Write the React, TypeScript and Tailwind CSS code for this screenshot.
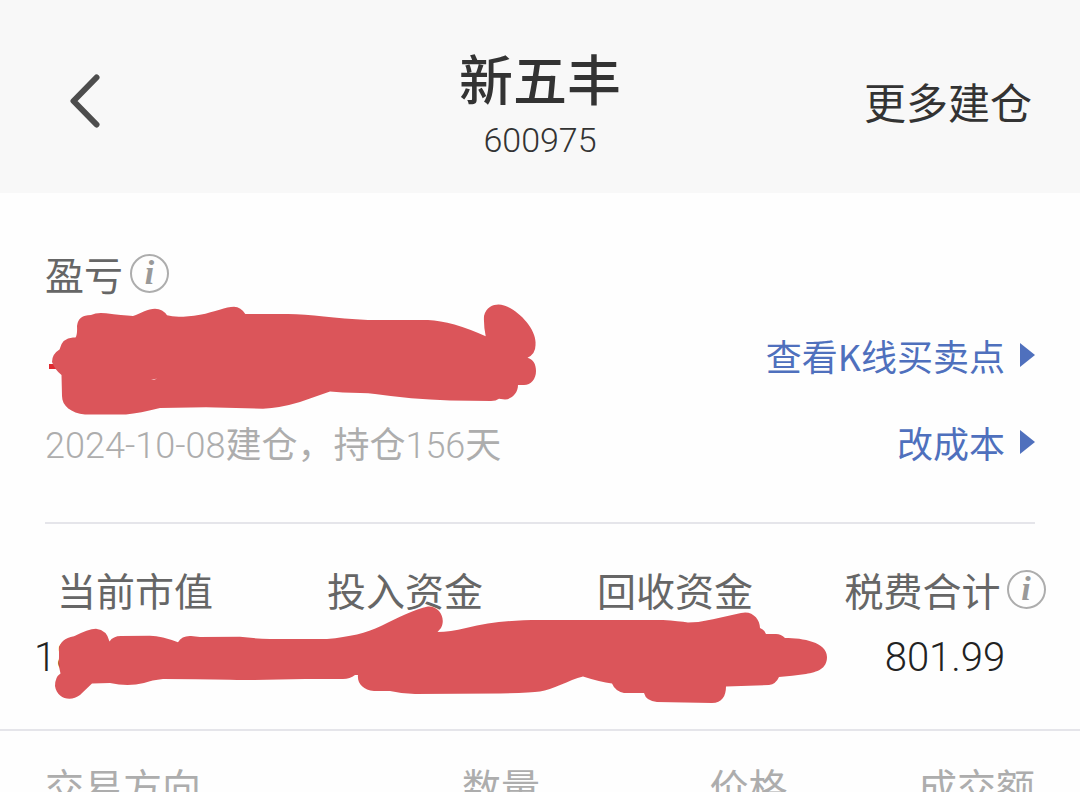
import { ReactNode } from 'react'

const PROFIT_MARK =
    'M52 362 Q52 354 59.5 349.5 Q62 338 73 337.5 L75.5 337.5 Q77.5 335 77 326 Q78 315 91 315 Q97 312 106 313.3 Q122 315.5 133 316 C141 313 148 308.7 155 308.7 Q163 309 167 315.3 Q177 318.5 200 314.7 C215 312 226 306.7 234 306.7 Q241 307 245.3 314 L288 314 C310 314 335 318.5 368 320 L428 320 Q452 321 485.7 336.3 Q483.5 325 484 316 C486 307 493 304.5 498.5 304.5 C514 305 537 328 535.5 344 Q536 354 527.5 357.7 C533 359 536 364 536 371 C536 379 531 385 524 385 L518 385 C518 393 512 399 505 399.5 L499 398.8 Q496 401 491 401 L450 400.5 Q410 399 375 394 Q362 392.5 343 392.5 L330 391.5 L300 402 Q280 408 263 408.7 L206 407.2 L160 408 Q140 413 126 414.5 L85 414.5 C71 413 62 406 62 396 L61.5 375 Q55 370 52 362 Z'

const ASSETS_MARK =
    'M59 657 L59 649 Q60 639 74 636.3 Q88 629 96 628.7 Q107 630 109.5 641.5 Q113 636 121 636 L150 635.7 Q162 636 178 642.3 Q182 635.5 191 636 L200 637 L240 636.8 Q255 638.5 270 639 L327 639 C350 637 366 633 381 626 C397 618 415 609 428 606.5 C440 606 446 619 441 628 L437.5 632 Q450 632 466 628 C490 622 512 620 540 620 L663 620 Q679 621 688 622.5 Q700 622.5 713 619.3 L741 613 C752 610 760 619 760 628 Q765 630 766 634 L776 634 Q781 634 785 638 C803 638 827 642 827 657 C827 669 817 672 806 674 Q792 676 779 677 Q776 684 769 685 L726 686.5 C726 696 722 703 712 703 L657 702 Q646 701 644 693 L624 693 Q615 691 612 683.5 Q600 682 583 676.5 C569 680 552 690 540 691.5 Q530 693 500 693.5 L415 694 Q403 694 390 691 L374 691 C363 690 357 683 358 675 L355 675 Q350 679 343 679 L305 679 Q270 680 237 680 Q210 679 163 679 Q152 680 144 683 Q128 687 110 683 L92 683.5 L80 695 C71 702 57 699 55 686 Q55 677 60.5 673.5 Q58.5 667 59 657 Z'

const COLUMNS = ['交易方向', '数量', '价格', '成交额']

const InfoButton = ({ label }: { label: string }) => (
    <button
        type="button"
        aria-label={label}
        className="flex size-[39px] shrink-0 items-center justify-center rounded-full border-2 border-[#adadad] font-['Liberation_Serif',serif] text-[34px] leading-none font-bold text-[#999] italic"
    >
        i
    </button>
)

const ActionLink = ({ children }: { children: string }) => (
    <a href="#" className="flex items-center gap-[15px] text-[36px] leading-[40px] text-[#4f70bd]">
        {children}
        <svg width="15" height="24" viewBox="0 0 15 24" fill="currentColor" aria-hidden="true">
            <path d="M0 0 L15 12 L0 24 Z" />
        </svg>
    </a>
)

const Stat = ({ label, info, children }: { label: string; info?: boolean; children?: ReactNode }) => (
    <div className="flex flex-col gap-[29px]">
        <dt className="flex items-center justify-center gap-[6px] text-[39px] leading-[40px] whitespace-nowrap text-[#666]">
            {label}
            {info && <InfoButton label={label} />}
        </dt>
        <dd className="h-[40px] text-center font-['Roboto',sans-serif] text-[40px] leading-[40px] font-light text-[#222]">
            {children}
        </dd>
    </div>
)

export default function App() {
    return (
        <main className="h-screen overflow-hidden bg-[#fefefe] font-['Noto_Sans_CJK_SC',sans-serif]">
            <header className="grid grid-cols-[1fr_auto_1fr] items-center bg-[#f8f8f8] px-[48px] pt-[41px] pb-[33px] text-[#333]">
                <button type="button" aria-label="返回" className="flex h-[60px] w-[60px] items-center pl-5">
                    <svg width="34" height="54" viewBox="0 0 34 54" fill="none" stroke="#4d4d4d" strokeWidth="6" strokeLinecap="round" strokeLinejoin="round">
                        <path d="M28.5 3.5 L5.5 27 L28.5 50.5" />
                    </svg>
                </button>
                <div className="flex flex-col items-center gap-[5px]">
                    <h1 className="text-[54px] leading-[74px] font-medium">新五丰</h1>
                    <p className="font-['Roboto',sans-serif] text-[34px] leading-[40px] font-light">600975</p>
                </div>
                <button type="button" className="justify-self-end text-[42px] leading-[60px]">更多建仓</button>
            </header>

            <section className="relative px-[45px] pt-[60px]">
                <div className="flex items-center gap-[7px]">
                    <h2 className="text-[39px] leading-[40px] text-[#666]">盈亏</h2>
                    <InfoButton label="盈亏" />
                </div>
                <div className="mt-[42px] flex justify-end">
                    <ActionLink>查看K线买卖点</ActionLink>
                </div>
                <div className="mt-[47px] flex items-baseline justify-between border-b-2 border-[#e5e5ea] pb-[56px]">
                    <p className="font-['Roboto','Noto_Sans_CJK_SC',sans-serif] text-[36px] leading-[40px] text-[#adadad]">
                        <span className="font-light">2024-10-08</span>建仓，持仓<span className="font-light">156</span>天
                    </p>
                    <ActionLink>改成本</ActionLink>
                </div>
                {/* Marker stroke over the profit figure */}
                <svg className="pointer-events-none absolute top-[107px] left-0" width="540" height="120" viewBox="0 300 540 120" aria-hidden="true">
                    <rect x="49" y="364" width="8" height="5" fill="#e02a30" />
                    <path d={PROFIT_MARK} fill="#db555a" />
                    <path d="M151 380 L157 378.5 L154 380 Z" fill="#f8dcdc" />
                </svg>
            </section>

            <section className="relative border-b-2 border-[#e5e5ea] pt-[45px] pb-[51px]">
                <dl className="grid grid-cols-4">
                    <Stat label="当前市值">
                        <span className="block pl-[34px] text-left">18</span>
                    </Stat>
                    <Stat label="投入资金" />
                    <Stat label="回收资金" />
                    <Stat label="税费合计" info>801.99</Stat>
                </dl>
                {/* Marker stroke over the asset figures */}
                <svg className="pointer-events-none absolute top-[76px] left-0" width="840" height="110" viewBox="0 600 840 110" aria-hidden="true">
                    <path d={ASSETS_MARK} fill="#db555a" />
                </svg>
            </section>

            <section className="px-[45px] pt-[34px]">
                <table className="w-full table-fixed text-[39px] leading-[40px] text-[#adadad]">
                    <thead>
                        <tr>
                            {COLUMNS.map((name) => (
                                <th key={name} scope="col" className="p-0 text-right font-normal first:text-left">
                                    {name}
                                </th>
                            ))}
                        </tr>
                    </thead>
                </table>
            </section>
        </main>
    )
}
